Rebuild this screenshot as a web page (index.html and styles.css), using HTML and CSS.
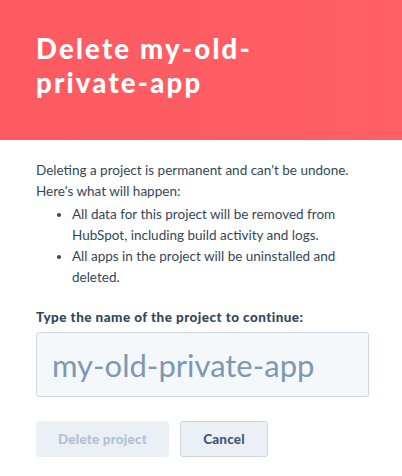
FILE: index.html
```html
<!DOCTYPE html>
<html lang="en">
<head>
    <meta charset="UTF-8">
    <meta name="viewport" content="width=device-width, initial-scale=1.0">
    <title>Delete project</title>
    <link rel="stylesheet" href="styles.css">
</head>
<body>

    <div class="dialog">
        <div class="dialog-header">
            <h2>Delete my-old-<br>private-app</h2>
        </div>

        <div class="dialog-body">
            <p class="intro">Deleting a project is permanent and can't be undone. Here's what will happen:</p>
            <ul class="consequences">
                <li>All data for this project will be removed from HubSpot, including build activity and logs.</li>
                <li>All apps in the project will be uninstalled and deleted.</li>
            </ul>

            <div class="input-group">
                <label for="project-name">Type the name of the project to continue:</label>
                <input type="text" id="project-name" placeholder="my-old-private-app">
            </div>

            <div class="actions">
                <button type="button" class="btn-danger" disabled>Delete project</button>
                <button type="button" class="btn-secondary">Cancel</button>
            </div>
        </div>
    </div>

</body>
</html>
```
FILE: styles.css
```css
body {
    font-family: 'Lato', sans-serif;
    background-color: #ffffff;
    margin: 0;
    padding: 0;
    color: #33475b;
}

.dialog {
    width: 402px;
}

.dialog-header {
    background: linear-gradient(90deg, #fd5a62 0%, #fe5f64 100%);
    height: 140px;
    box-sizing: border-box;
    padding: 32px 36px 0;
}

h2 {
    margin: 0;
    color: #ffffff;
    font-size: 27.5px;
    line-height: 34px;
    font-weight: 900;
    letter-spacing: 2.2px;
}

.dialog-body {
    padding: 20px 36px 0;
    font-size: 13.5px;
    line-height: 21px;
}

.intro {
    margin: 0;
}

.consequences {
    margin: 2px 0 0;
    padding-left: 36px;
}

.input-group {
    margin-top: 19px;
}

.input-group label {
    display: block;
    font-weight: 900;
    font-size: 13.5px;
    line-height: 21px;
    letter-spacing: 0.45px;
    margin-bottom: 4px;
}

input[type="text"] {
    box-sizing: border-box;
    width: 333px;
    height: 65px;
    padding: 0 15px;
    background: #f5f8fa;
    border: 1px solid #cbd6e2;
    border-radius: 3px;
    font-family: 'Lato', sans-serif;
    font-size: 31px;
    color: #33475b;
}

input[type="text"]::placeholder {
    color: #7c98b6;
    opacity: 1;
}

.actions {
    display: flex;
    gap: 11px;
    margin-top: 24px;
}

button {
    box-sizing: border-box;
    height: 36px;
    padding: 0;
    border-radius: 3px;
    font-family: 'Lato', sans-serif;
    font-size: 13.5px;
    font-weight: 900;
    letter-spacing: 0.2px;
    white-space: nowrap;
    cursor: pointer;
}

.btn-danger {
    width: 133px;
    background: #eaf0f6;
    color: #b0c1d4;
    border: 1px solid #eaf0f6;
    cursor: not-allowed;
}

.btn-secondary {
    width: 88px;
    background: #eaf0f6;
    color: #425b76;
    border: 1px solid #cbd6e2;
}
```
